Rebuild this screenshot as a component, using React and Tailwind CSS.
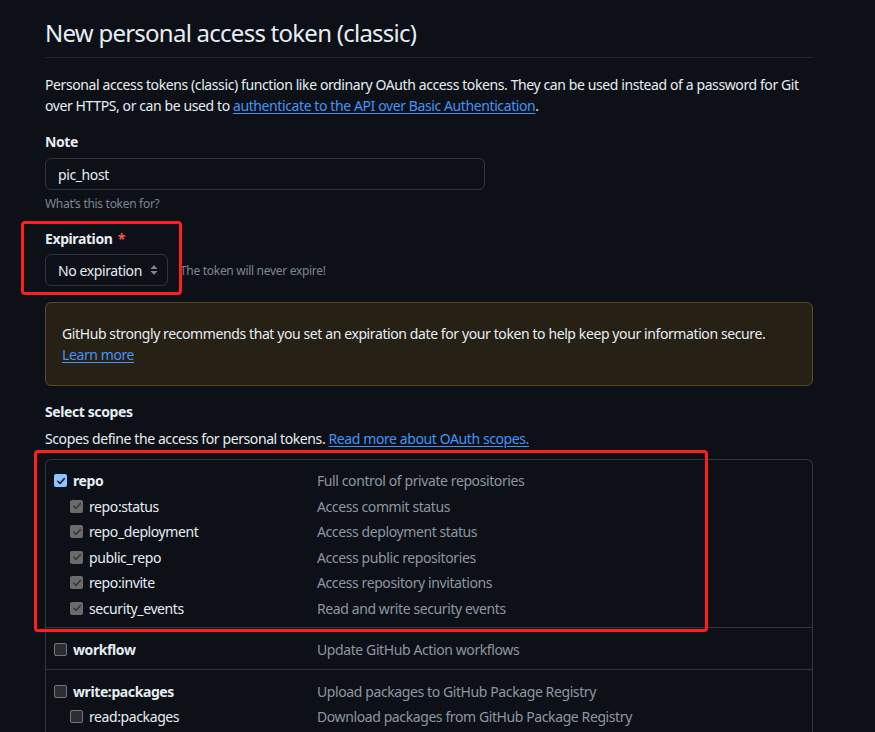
import React from 'react'

const Check = ({ tone = 'blue' }) => {
  if (tone === 'off') {
    return <span className="block w-[13px] h-[13px] rounded-[2px] bg-[#2b2d31] border border-[#6e7681]" />
  }
  const bg = tone === 'blue' ? 'bg-[#8cc4ff]' : 'bg-[#6b6b6b]'
  const stroke = tone === 'blue' ? '#1b2330' : '#3a3a3a'
  return (
    <span className={`flex items-center justify-center w-[13px] h-[13px] rounded-[2px] ${bg}`}>
      <svg width="10" height="10" viewBox="0 0 10 10" fill="none">
        <path d="M1.8 5.2l2.2 2.2 4.3-4.8" stroke={stroke} strokeWidth="1.6" strokeLinecap="round" strokeLinejoin="round" />
      </svg>
    </span>
  )
}

const ScopeRow = ({ name, desc, parent, tone, first }) => (
  <div className={`flex items-center h-[21px] ${first ? '' : 'mt-[4.5px]'}`}>
    <div className={`flex items-center w-[263px] ${parent ? '' : 'pl-[16px]'}`}>
      <Check tone={tone} />
      <span className={`ml-[6px] ${parent ? 'font-bold' : ''} text-[#e6edf3]`}>{name}</span>
    </div>
    <span className="text-[#8d96a0]">{desc}</span>
  </div>
)

const repoSubs = [
  ['repo:status', 'Access commit status'],
  ['repo_deployment', 'Access deployment status'],
  ['public_repo', 'Access public repositories'],
  ['repo:invite', 'Access repository invitations'],
  ['security_events', 'Read and write security events'],
]

export default function App() {
  return (
    <div className="min-h-screen bg-[#0d1117] text-[#e6edf3] text-[14px] leading-[21px] tracking-[-0.4px] font-['Noto_Sans',sans-serif] overflow-hidden">
      <div className="ml-[45px] w-[768px]">
        <div className="pt-[15px] pb-[6px] border-b border-[#21262d]">
          <h1 className="text-[24px] leading-[36px] font-normal tracking-[-0.75px]">New personal access token (classic)</h1>
        </div>

        <p className="mt-[16px]">
          Personal access tokens (classic) function like ordinary OAuth access tokens. They can be used instead of a password for Git over HTTPS, or can be used to{' '}
          <a className="text-[#4493f8] underline underline-offset-2">authenticate to the API over Basic Authentication</a>.
        </p>

        <div className="mt-[15px] font-bold">Note</div>
        <div className="mt-[6px] w-[440px] h-[32px] rounded-[6px] border border-[#30363d] bg-[#0d1117] flex items-center px-[12px]">
          pic_host
        </div>
        <div className="mt-[5px] text-[12px] leading-[18px] tracking-[-0.3px] text-[#7d8590]">What’s this token for?</div>

        <div className="relative mt-[15px]">
          <div className="font-bold">
            Expiration <span className="text-[#f85149] ml-[2px]">*</span>
          </div>
          <div className="mt-[5px] flex items-center">
            <div className="w-[123px] h-[32px] rounded-[6px] border border-[#30363d] bg-[#0d1117] flex items-center justify-between pl-[12px] pr-[8px]">
              <span>No expiration</span>
              <svg width="10" height="14" viewBox="0 0 10 14" fill="#7d8590">
                <path d="M5 2l3.5 4h-7z" />
                <path d="M5 12L1.5 8h7z" />
              </svg>
            </div>
            <span className="ml-[12px] text-[12px] tracking-[-0.3px] text-[#7d8590]">The token will never expire!</span>
          </div>
          <div className="absolute left-[-24px] top-[-7px] w-[161px] h-[74px] border-[3px] border-[#ff1e1e] rounded-[4px]" />
        </div>

        <div className="mt-[16px] rounded-[6px] border border-[#5b4a1f] bg-[#272115] px-[16px] py-[20px]">
          <div>GitHub strongly recommends that you set an expiration date for your token to help keep your information secure.</div>
          <a className="text-[#4493f8] underline underline-offset-2">Learn more</a>
        </div>

        <div className="mt-[15px] font-bold">Select scopes</div>
        <div className="mt-[6px]">
          Scopes define the access for personal tokens.{' '}
          <a className="text-[#4493f8] underline underline-offset-2">Read more about OAuth scopes.</a>
        </div>

        <div className="relative mt-[10px] rounded-t-[6px] border border-b-0 border-[#30363d]">
          <div className="pl-[8px] pt-[10px] pb-[8px] border-b border-[#30363d]">
            <ScopeRow name="repo" desc="Full control of private repositories" parent tone="blue" first />
            {repoSubs.map(([n, d]) => (
              <ScopeRow key={n} name={n} desc={d} tone="gray" />
            ))}
          </div>
          <div className="pl-[8px] pt-[11px] pb-[9px] border-b border-[#30363d]">
            <ScopeRow name="workflow" desc="Update GitHub Action workflows" parent tone="off" first />
          </div>
          <div className="pl-[8px] pt-[11px] pb-[9px]">
            <ScopeRow name="write:packages" desc="Upload packages to GitHub Package Registry" parent tone="off" first />
            <ScopeRow name="read:packages" desc="Download packages from GitHub Package Registry" tone="off" />
          </div>
          <div className="absolute left-[-12px] top-[-10px] w-[674px] h-[182px] border-[3px] border-[#ff1e1e] rounded-[4px]" />
        </div>
      </div>
    </div>
  )
}
